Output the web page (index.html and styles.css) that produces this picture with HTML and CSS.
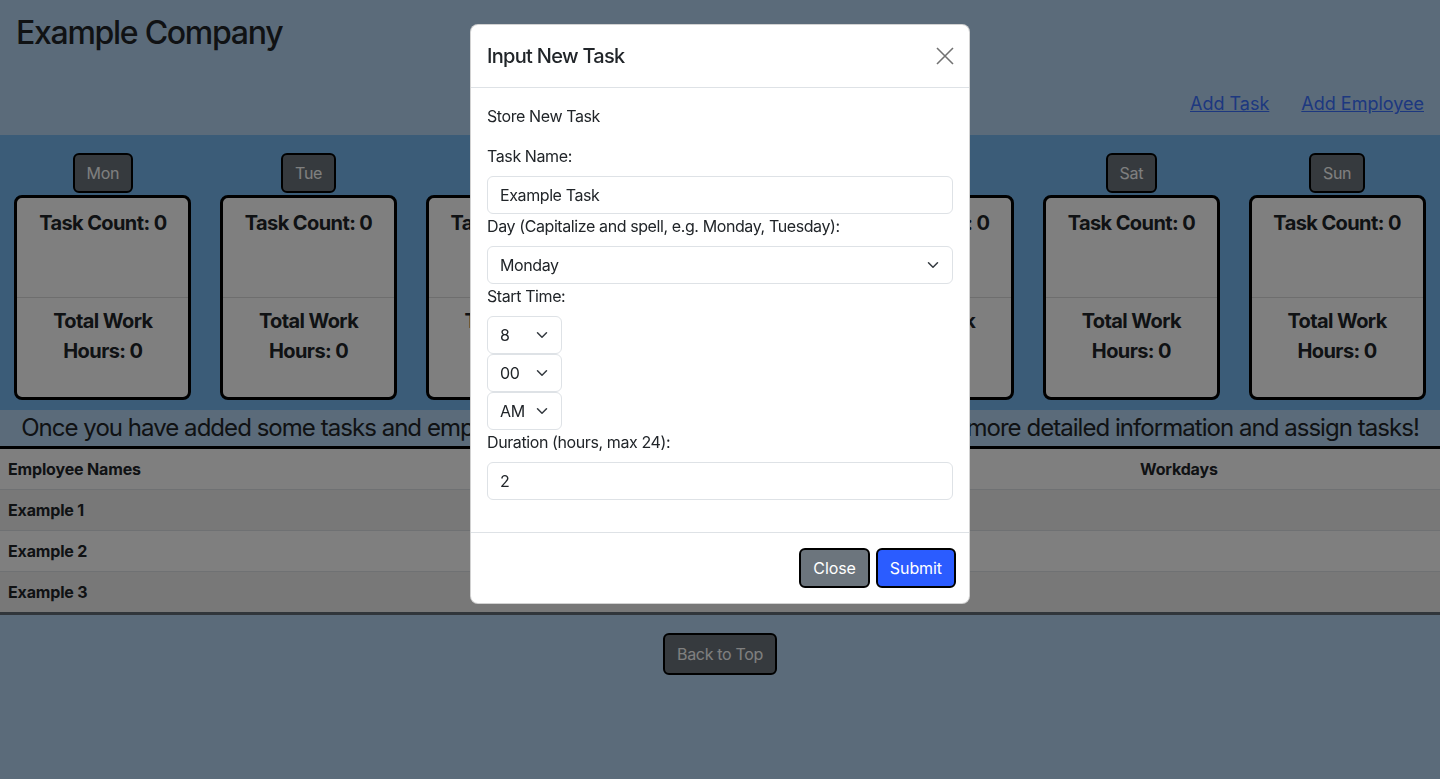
FILE: index.html
```html
<!DOCTYPE html>
<html lang="en">
<head>
<meta charset="utf-8">
<title>Example Company</title>
<link rel="stylesheet" href="styles.css">
</head>
<body>
<header class="site-header">
  <h2 class="company">Example Company</h2>
  <nav class="nav-links">
    <a href="#" class="nav-link">Add Task</a>
    <a href="#" class="nav-link">Add Employee</a>
  </nav>
</header>

<section class="week">
  <div class="day">
    <button class="day-btn">Mon</button>
    <div class="day-card">
      <div class="card-sec">Task Count: 0</div>
      <div class="card-sec card-sec-bottom">Total Work<br>Hours: 0</div>
    </div>
  </div>
  <div class="day">
    <button class="day-btn">Tue</button>
    <div class="day-card">
      <div class="card-sec">Task Count: 0</div>
      <div class="card-sec card-sec-bottom">Total Work<br>Hours: 0</div>
    </div>
  </div>
  <div class="day">
    <button class="day-btn">Wed</button>
    <div class="day-card">
      <div class="card-sec">Task Count: 0</div>
      <div class="card-sec card-sec-bottom">Total Work<br>Hours: 0</div>
    </div>
  </div>
  <div class="day">
    <button class="day-btn">Thu</button>
    <div class="day-card">
      <div class="card-sec">Task Count: 0</div>
      <div class="card-sec card-sec-bottom">Total Work<br>Hours: 0</div>
    </div>
  </div>
  <div class="day">
    <button class="day-btn">Fri</button>
    <div class="day-card">
      <div class="card-sec">Task Count: 0</div>
      <div class="card-sec card-sec-bottom">Total Work<br>Hours: 0</div>
    </div>
  </div>
  <div class="day">
    <button class="day-btn">Sat</button>
    <div class="day-card">
      <div class="card-sec">Task Count: 0</div>
      <div class="card-sec card-sec-bottom">Total Work<br>Hours: 0</div>
    </div>
  </div>
  <div class="day">
    <button class="day-btn">Sun</button>
    <div class="day-card">
      <div class="card-sec">Task Count: 0</div>
      <div class="card-sec card-sec-bottom">Total Work<br>Hours: 0</div>
    </div>
  </div>
</section>

<p class="message">Once you have added some tasks and employees, click on each day card at the top to see more detailed information and assign tasks!</p>

<table class="emp-table">
  <colgroup>
    <col class="col-name">
    <col class="col-mid">
    <col class="col-days">
  </colgroup>
  <thead>
    <tr><th>Employee Names</th><th>Assigned Tasks</th><th>Workdays</th></tr>
  </thead>
  <tbody>
    <tr><th>Example 1</th><td></td><td></td></tr>
    <tr><th>Example 2</th><td></td><td></td></tr>
    <tr><th>Example 3</th><td></td><td></td></tr>
  </tbody>
</table>

<div class="back-wrap">
  <button class="day-btn back-btn">Back to Top</button>
</div>

<div class="backdrop">
  <div class="modal-dialog">
    <div class="modal-content">
      <div class="modal-header">
        <h5 class="modal-title">Input New Task</h5>
        <button class="btn-close" aria-label="Close">
          <svg width="18" height="18" viewBox="0 0 18 18"><path d="M1 1L17 17M17 1L1 17" stroke="#000" stroke-width="1.6" fill="none"/></svg>
        </button>
      </div>
      <div class="modal-body">
        <p class="intro">Store New Task</p>
        <form class="task-form">
          <label class="form-label">Task Name:</label>
          <input class="form-control" type="text" value="Example Task">
          <label class="form-label">Day (Capitalize and spell, e.g. Monday, Tuesday):</label>
          <div class="select-wrap">
            <select class="form-select"><option>Monday</option></select>
            <svg class="chev" width="12" height="12" viewBox="0 0 16 16"><path d="M2 5l6 6 6-6" stroke="#343a40" stroke-width="2" fill="none" stroke-linecap="round" stroke-linejoin="round"/></svg>
          </div>
          <label class="form-label">Start Time:</label>
          <div class="select-wrap small">
            <select class="form-select"><option>8</option></select>
            <svg class="chev" width="12" height="12" viewBox="0 0 16 16"><path d="M2 5l6 6 6-6" stroke="#343a40" stroke-width="2" fill="none" stroke-linecap="round" stroke-linejoin="round"/></svg>
          </div>
          <div class="select-wrap small">
            <select class="form-select"><option>00</option></select>
            <svg class="chev" width="12" height="12" viewBox="0 0 16 16"><path d="M2 5l6 6 6-6" stroke="#343a40" stroke-width="2" fill="none" stroke-linecap="round" stroke-linejoin="round"/></svg>
          </div>
          <div class="select-wrap small">
            <select class="form-select"><option>AM</option></select>
            <svg class="chev" width="12" height="12" viewBox="0 0 16 16"><path d="M2 5l6 6 6-6" stroke="#343a40" stroke-width="2" fill="none" stroke-linecap="round" stroke-linejoin="round"/></svg>
          </div>
          <label class="form-label">Duration (hours, max 24):</label>
          <input class="form-control" type="text" value="2">
        </form>
      </div>
      <div class="modal-footer">
        <button class="btn btn-secondary">Close</button>
        <button class="btn btn-primary">Submit</button>
      </div>
    </div>
  </div>
</div>
</body>
</html>
```

FILE: styles.css
```css
* { box-sizing: border-box; }

html, body {
  margin: 0;
  padding: 0;
}

body {
  min-height: 100vh;
  background: #b6d6f4;
  color: #212529;
  font-family: Inter, "Noto Sans", "Liberation Sans", sans-serif;
  font-size: 16px;
  line-height: 1.5;
  letter-spacing: -0.025em;
}

.site-header {
  padding: 14px 16px 16px;
}

.company {
  margin: 0;
  font-size: 32px;
  font-weight: 500;
  line-height: 1.2;
  letter-spacing: -0.04em;
}

.nav-links {
  margin-top: 37px;
  display: flex;
  justify-content: flex-end;
  gap: 32px;
  font-size: 18px;
  line-height: 30px;
  letter-spacing: 0;
}

.nav-link {
  color: #3a70ff;
  text-decoration: underline;
}

.week {
  background: #77b9f1;
  padding: 18px 0 10px;
  display: flex;
  justify-content: space-around;
}

.day {
  width: 177px;
  display: flex;
  flex-direction: column;
  align-items: center;
}

.day-btn {
  font-family: inherit;
  font-size: 16px;
  line-height: 24px;
  letter-spacing: -0.02em;
  padding: 6px 12px;
  background: #6c757d;
  color: #fff;
  border: 2px solid #000;
  border-radius: 6px;
}

.day .day-btn {
  margin-bottom: 2px;
}

.day-card {
  width: 177px;
  background: #fff;
  border: 3px solid #000;
  border-radius: 8px;
  font-size: 20px;
  font-weight: 700;
  line-height: 30px;
  letter-spacing: -0.03em;
  text-align: center;
}

.card-sec {
  height: 99px;
  padding: 10px 4px 8px;
}

.card-sec-bottom {
  height: 100px;
  padding-top: 8px;
  border-top: 1px solid #dcdcdc;
}

.message {
  margin: 0;
  font-size: 24px;
  line-height: 36px;
  letter-spacing: -0.04em;
  text-align: center;
  white-space: nowrap;
  overflow: hidden;
}

.emp-table {
  width: 100%;
  border-collapse: collapse;
  table-layout: fixed;
  border-top: 3px solid #000;
  border-bottom: 3px solid #636c76;
  background: #fff;
  letter-spacing: -0.01em;
}

.col-name { width: 560px; }
.col-mid { width: 572px; }
.col-days { width: 308px; }

.emp-table th,
.emp-table td {
  padding: 8px;
  text-align: left;
  font-weight: 700;
  line-height: 24px;
  border-bottom: 1px solid #dee2e6;
}

.emp-table tbody tr:nth-child(odd) {
  background: #f0f0f0;
}

.emp-table tbody tr:last-child th,
.emp-table tbody tr:last-child td {
  border-bottom: 0;
}

.back-wrap {
  display: flex;
  justify-content: center;
  padding-top: 18px;
}

.back-btn {
  padding: 7px 12px;
}

/* Modal */
.backdrop {
  position: fixed;
  inset: 0;
  background: rgba(0, 0, 0, 0.5);
}

.modal-dialog {
  width: 500px;
  margin: 24px auto 0;
}

.modal-content {
  background: #fff;
  border: 1px solid rgba(0, 0, 0, 0.175);
  border-radius: 8px;
}

.modal-header {
  display: flex;
  align-items: center;
  justify-content: space-between;
  padding: 16px;
  border-bottom: 1px solid #dee2e6;
}

.modal-title {
  margin: 0;
  font-size: 20px;
  font-weight: 500;
  line-height: 30px;
  letter-spacing: -0.035em;
}

.btn-close {
  width: 24px;
  height: 24px;
  padding: 0;
  margin-right: -4px;
  border: 0;
  background: transparent;
  opacity: 0.55;
  display: flex;
  align-items: center;
  justify-content: center;
}

.modal-body {
  padding: 16px;
}

.intro {
  margin: 0 0 16px;
}

.task-form {
  margin: 0 0 16px;
}

.form-label {
  display: block;
  margin-bottom: 8px;
}

.form-control,
.form-select {
  display: block;
  width: 100%;
  height: 38px;
  padding: 6px 12px;
  font-family: inherit;
  font-size: 16px;
  line-height: 24px;
  letter-spacing: -0.025em;
  color: #212529;
  background: #fff;
  border: 1px solid #dee2e6;
  border-radius: 6px;
}

.form-select {
  appearance: none;
  -webkit-appearance: none;
  padding-right: 36px;
}

.select-wrap {
  position: relative;
}

.select-wrap.small {
  width: 75px;
}

.chev {
  position: absolute;
  right: 14px;
  top: 13px;
  pointer-events: none;
}

.modal-footer {
  display: flex;
  justify-content: flex-end;
  gap: 6px;
  padding: 15px 13px 15px 12px;
  border-top: 1px solid #dee2e6;
}

.btn {
  font-family: inherit;
  font-size: 16px;
  line-height: 24px;
  letter-spacing: -0.005em;
  padding: 6px 12px;
  border: 2px solid #000;
  border-radius: 6px;
  color: #fff;
}

.btn-secondary { background: #6c757d; }
.btn-primary { background: #2b5cff; }
```
